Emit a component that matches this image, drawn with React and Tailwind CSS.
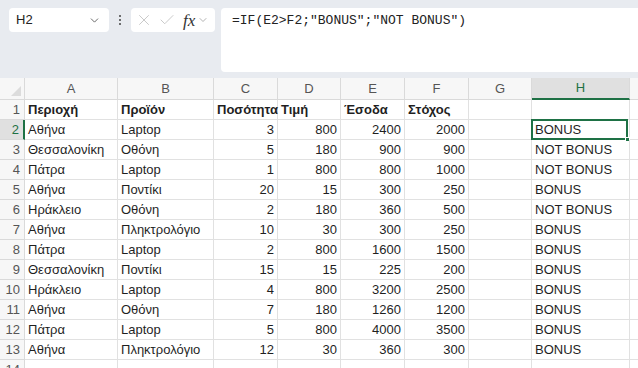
import { ChevronDown, X, Check } from "lucide-react";

const cols = [
  { key: "A", w: 93 },
  { key: "B", w: 96 },
  { key: "C", w: 64 },
  { key: "D", w: 63 },
  { key: "E", w: 64 },
  { key: "F", w: 64 },
  { key: "G", w: 63 },
  { key: "H", w: 98 },
];

const rows = [
  ["Αθήνα", "Laptop", 3, 800, 2400, 2000, "BONUS"],
  ["Θεσσαλονίκη", "Οθόνη", 5, 180, 900, 900, "NOT BONUS"],
  ["Πάτρα", "Laptop", 1, 800, 800, 1000, "NOT BONUS"],
  ["Αθήνα", "Ποντίκι", 20, 15, 300, 250, "BONUS"],
  ["Ηράκλειο", "Οθόνη", 2, 180, 360, 500, "NOT BONUS"],
  ["Αθήνα", "Πληκτρολόγιο", 10, 30, 300, 250, "BONUS"],
  ["Πάτρα", "Laptop", 2, 800, 1600, 1500, "BONUS"],
  ["Θεσσαλονίκη", "Ποντίκι", 15, 15, 225, 200, "BONUS"],
  ["Ηράκλειο", "Laptop", 4, 800, 3200, 2500, "BONUS"],
  ["Αθήνα", "Οθόνη", 7, 180, 1260, 1200, "BONUS"],
  ["Πάτρα", "Laptop", 5, 800, 4000, 3500, "BONUS"],
  ["Αθήνα", "Πληκτρολόγιο", 12, 30, 360, 300, "BONUS"],
];

const headers = ["Περιοχή", "Προϊόν", "Ποσότητα", "Τιμή", "Έσοδα", "Στόχος", "", ""];

function Cell({ w, children, right, bold, selected }) {
  return (
    <div
      className={
        "relative h-5 shrink-0 border-r border-b border-[#e1e1e1] px-[3px] leading-[19px] whitespace-nowrap overflow-visible " +
        (right ? "text-right " : "text-left ") +
        (bold ? "font-bold" : "")
      }
      style={{ width: w }}
    >
      {children}
      {selected && (
        <div className="absolute -left-px -top-px h-[21px] w-[97px] border-2 border-[#1e7145]">
          <div className="absolute -right-[4px] -bottom-[4px] h-[5px] w-[5px] bg-[#1e7145] border border-white" />
        </div>
      )}
    </div>
  );
}

export default function App() {
  return (
    <div
      className="h-[368px] w-[638px] overflow-hidden bg-[#e8ebf0]"
      style={{ fontFamily: "'Liberation Sans', 'DejaVu Sans', sans-serif" }}
    >
      {/* Formula bar */}
      <div className="flex h-[78px] items-start gap-[6px] pl-[9px] pt-[8px]">
        <div className="flex h-6 w-[100px] items-center justify-between rounded-[4px] bg-white pl-[7px] pr-[8px] text-[13px] text-[#222]">
          <span>H2</span>
          <ChevronDown size={13} strokeWidth={1.6} className="text-[#555]" />
        </div>
        <div className="flex h-6 w-[10px] flex-col items-center justify-center gap-[2px]">
          <span className="h-[2px] w-[2px] rounded-full bg-[#444]" />
          <span className="h-[2px] w-[2px] rounded-full bg-[#444]" />
          <span className="h-[2px] w-[2px] rounded-full bg-[#444]" />
        </div>
        <div className="flex h-6 w-[84px] items-center gap-[5px] rounded-[4px] bg-white pl-[4px] text-[#c4c4c4]">
          <X size={18} strokeWidth={1.2} />
          <Check size={18} strokeWidth={1.2} />
          <span
            className="ml-[2px] text-[17px] italic leading-none text-[#333]"
            style={{ fontFamily: "'Liberation Serif', serif" }}
          >
            fx
          </span>
          <ChevronDown size={12} strokeWidth={1.5} className="-ml-[3px] text-[#999]" />
        </div>
        <div
          className="ml-0 h-16 flex-1 rounded-l-[4px] bg-white pl-[11px] pt-[3px] text-[13px] text-[#222]"
          style={{ fontFamily: "'Liberation Mono', 'DejaVu Sans Mono', monospace" }}
        >
          =IF(E2&gt;F2;"BONUS";"NOT BONUS")
        </div>
      </div>

      {/* Grid */}
      <div className="bg-white text-[13px] text-[#1f1f1f]">
        {/* Column header row */}
        <div className="flex h-[22px] bg-[#f7f7f7] text-[#555]">
          <div className="relative w-[25px] shrink-0 border-r border-b border-[#dadada]">
            <div className="absolute bottom-[3px] right-[3px] h-0 w-0 border-b-[10px] border-l-[10px] border-b-[#dcdcdc] border-l-transparent" />
          </div>
          {cols.map((c) => (
            <div
              key={c.key}
              className={
                "flex shrink-0 items-center justify-center border-r " +
                (c.key === "H"
                  ? "border-b-2 border-r-[#dadada] border-b-[#1e7145] bg-[#e0e0e0] text-[#1e7145]"
                  : "border-b border-[#dadada]")
              }
              style={{ width: c.w }}
            >
              {c.key}
            </div>
          ))}
          <div className="flex-1 border-b border-[#dadada]" />
        </div>

        {/* Row 1 headers */}
        <div className="flex">
          <div className="h-5 w-[25px] shrink-0 border-r border-b border-[#dadada] bg-[#f7f7f7] pr-[4px] text-right leading-[19px] text-[#555]">
            1
          </div>
          {cols.map((c, i) => (
            <Cell key={c.key} w={c.w} bold>
              {headers[i]}
            </Cell>
          ))}
          <div className="h-5 flex-1 border-b border-[#e1e1e1]" />
        </div>

        {rows.map((r, idx) => {
          const n = idx + 2;
          const sel = n === 2;
          return (
            <div key={n} className="flex">
              <div
                className={
                  "h-5 w-[25px] shrink-0 border-b border-[#dadada] pr-[4px] text-right leading-[19px] " +
                  (sel
                    ? "border-r-2 border-r-[#1e7145] bg-[#e0e0e0] text-[#1e7145]"
                    : "border-r bg-[#f7f7f7] text-[#555]")
                }
              >
                {n}
              </div>
              <Cell w={cols[0].w}>{r[0]}</Cell>
              <Cell w={cols[1].w}>{r[1]}</Cell>
              <Cell w={cols[2].w} right>{r[2]}</Cell>
              <Cell w={cols[3].w} right>{r[3]}</Cell>
              <Cell w={cols[4].w} right>{r[4]}</Cell>
              <Cell w={cols[5].w} right>{r[5]}</Cell>
              <Cell w={cols[6].w}></Cell>
              <Cell w={cols[7].w} selected={sel}>{r[6]}</Cell>
              <div className="h-5 flex-1 border-b border-[#e1e1e1]" />
            </div>
          );
        })}

        <div className="flex">
          <div className="h-5 w-[25px] shrink-0 border-r border-b border-[#dadada] bg-[#f7f7f7] pr-[4px] text-right leading-[19px] text-[#555]">
            14
          </div>
          {cols.map((c) => (
            <Cell key={c.key} w={c.w} />
          ))}
        </div>
      </div>
    </div>
  );
}
